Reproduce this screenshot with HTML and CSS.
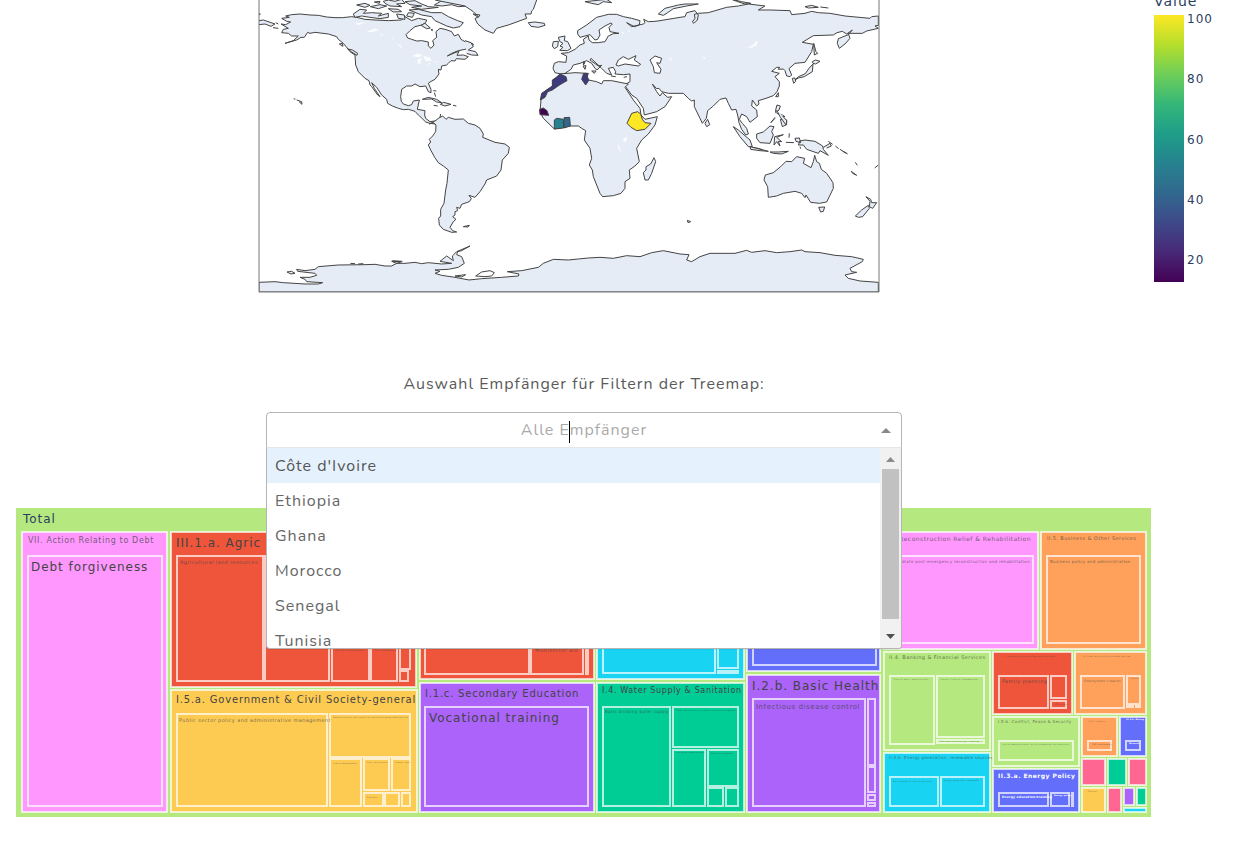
FILE: index.html
```html
<!DOCTYPE html>
<html lang="de">
<head>
<meta charset="utf-8">
<title>Treemap</title>
<link rel="stylesheet" href="styles.css">
</head>
<body>
<svg class="map" viewBox="0 0 1256 300" role="img" aria-label="Weltkarte der Empfänger">
  <defs>
    <linearGradient id="viridis" x1="0" y1="1" x2="0" y2="0">
      <stop offset="0" stop-color="#440154"/><stop offset=".111" stop-color="#482878"/><stop offset=".222" stop-color="#3e4989"/><stop offset=".333" stop-color="#31688e"/><stop offset=".444" stop-color="#26828e"/><stop offset=".556" stop-color="#1f9e89"/><stop offset=".667" stop-color="#35b779"/><stop offset=".778" stop-color="#6ece58"/><stop offset=".889" stop-color="#b5de2b"/><stop offset="1" stop-color="#fde725"/>
    </linearGradient>
    <clipPath id="frame"><rect x="259" y="0" width="620" height="292"/></clipPath>
  </defs>
  <g clip-path="url(#frame)">
    <g class="land" transform="translate(255 0) scale(.33333)">
      <path d="M78 72L92 74L107 66L95 64L80 55L103 52L92 48L110 44L135 42L165 45L190 46L215 51L240 53L262 53L290 50L305 52L330 58L360 60L400 62L440 60L450 50L470 62L490 55L515 60L512 68L500 75L480 80L465 92L453 104L458 114L470 118L485 123L500 122L520 126L520 138L528 145L537 135L533 122L545 112L543 95L555 85L570 88L582 92L590 95L598 108L610 103L618 118L630 125L645 128L655 132L652 140L630 148L610 152L590 160L577 168L600 158L612 154L606 166L625 165L640 170L630 178L604 176L600 183L588 182L580 190L575 195L560 198L558 210L550 208L552 222L540 238L525 246L520 250L528 268L528 278L520 275L512 258L495 260L480 252L470 258L455 258L440 268L437 290L439 304L445 312L460 317L470 314L475 303L493 300L487 328L510 332L509 345L512 355L525 365L545 362L540 372L525 370L512 366L498 352L490 345L480 334L460 328L445 329L430 325L412 318L398 310L395 298L380 285L365 262L350 248L358 265L375 290L368 285L350 260L345 255L342 242L330 235L310 215L302 195L300 165L285 155L280 148L265 130L250 118L245 110L220 102L180 97L165 100L158 97L148 112L138 112L125 120L90 130L115 122L130 108L110 108L100 100L80 98L85 88L100 85Z"/>
      <path d="M10 40L16 42L12 46M12 62L25 60L60 72L48 79L30 72L12 74M62 68L70 72M54 83L70 85M116 296L121 298M125 300L140 305L141 313L132 305M253 132L262 130L264 139ZM278 147L292 150L308 160L306 166L290 156ZM502 298L520 292L545 298L560 308L545 306L530 297ZM536 316L548 318M556 313L566 307L588 313L570 318ZM594 316L604 318M535 272L544 273M538 278L542 290M528 89L532 88L532 92Z"/>
      <path d="M295 42L315 28L335 30L325 40L350 38L380 40L370 48L400 40L400 52L375 56L345 52L320 48L300 52ZM305 15L330 10L345 16L330 22ZM346 20L375 14L395 18L370 26ZM358 6L375 4L373 10ZM385 4L400 0L420 4L440 -2L450 10L425 12L440 20L405 18L390 10ZM400 26L430 28L440 35L415 36ZM425 42L448 45L450 58L430 55ZM450 5L480 2L500 12L520 20L550 22L500 28L470 22L500 18L465 14ZM462 30L490 28L530 38L560 38L580 50L608 62L625 68L615 80L595 84L575 78L558 70L540 62L530 50L500 45ZM460 38L478 40L472 52L455 48ZM498 76L510 70L526 84L515 86ZM538 15L555 5L560 0L660 -5L660 25L640 18L610 20L590 14L560 18Z"/>
    </g>
    <g class="land" transform="translate(400 110) scale(.33333)">
      <path d="M88 42L104 34L115 25L128 18L138 28L145 22L165 28L190 27L205 40L225 45L240 55L250 72L248 82L285 97L315 102L328 112L325 130L307 150L303 180L290 198L260 210L255 222L240 245L225 262L207 256L214 266L208 275L185 283L180 295L170 292L173 302L165 305L165 315L158 320L168 328L160 335L150 352L158 362L170 366L155 367L130 358L118 345L116 325L122 318L122 298L132 280L137 240L141 220L145 180L130 168L115 158L104 142L92 120L85 105L92 96L88 88L98 78L107 65L108 45L100 38Z"/>
      <path d="M190 350L208 346L204 351ZM120 22L122 12M735 210L730 188L738 180L738 170L752 162L762 143L767 155L755 190L745 210Z"/>
    </g>
    <g class="land" transform="translate(465 0) scale(.33333)">
      <path d="M288 222L270 218L264 205L268 190L280 185L303 187L305 168L288 160L310 158L330 148L345 135L358 130L355 118L370 108L372 120L382 128L400 128L420 125L430 108L445 101L462 100L435 95L432 82L442 72L438 69L420 78L402 90L405 105L398 118L390 120L375 104L360 108L345 112L338 102L338 92L365 75L395 52L415 47L430 43L455 43L475 50L500 55L525 62L523 75L508 80L485 68L500 80L535 72L540 68L536 58L550 65L570 64L585 62L645 52L660 50L665 38L690 32L700 45L697 60L687 70L682 66L690 55L688 43L700 40L730 38L785 22L820 18L850 12L900 18L880 30L915 30L975 32L980 44L1020 40L1040 34L1060 38L1095 40L1140 48L1215 55L1220 50L1240 48L1240 76L1230 78L1240 85L1205 93L1192 100L1150 100L1155 115L1140 132L1123 145L1117 130L1120 116L1150 104L1162 90L1145 102L1132 94L1116 98L1105 105L1045 107L1012 127L1045 133L1040 155L1020 187L990 190L972 206L980 225L975 230L965 228L960 212L955 207L940 208L944 202L935 202L920 214L943 220L930 230L943 245L943 258L936 275L925 287L900 296L880 302L882 312L875 318L862 300L860 318L875 330L877 350L855 367L845 350L830 342L823 358L832 370L845 385L850 402L842 405L830 388L822 368L818 345L813 328L800 330L790 310L783 294L765 298L745 318L728 332L724 355L712 370L705 355L688 320L688 300L680 303L670 295L655 280L610 280L590 275L582 265L575 266L562 252L575 275L585 288L592 278L608 292L620 290L600 320L575 335L538 345L535 325L515 295L500 285L478 255L495 245L495 222L475 224L450 222L452 215L445 202L430 205L440 225L425 220L410 205L378 175L375 180L400 198L410 196L396 210L390 205L380 190L365 182L345 190L325 195L318 208L300 220Z"/>
      <path class="water" d="M453 195L460 180L475 170L490 178L513 167L508 180L527 193L520 198L480 192L460 198ZM555 180L570 168L590 175L585 190L575 188L588 208L585 220L568 218L565 200Z"/>
      <path d="M285 222L330 218L365 220L370 240L395 245L410 252L415 242L440 242L490 252L480 262L505 300L525 325L528 345L540 358L577 350L570 375L550 402L530 420L515 445L523 485L510 498L493 510L495 535L480 545L480 565L468 580L445 587L413 590L405 580L385 530L382 510L373 495L380 475L375 445L358 420L362 392L350 385L340 378L315 378L268 387L235 355L225 335L228 300L245 270L262 262L265 240Z"/>
      <path d="M190 68L210 66L238 70L240 76L220 82L198 79ZM262 138L265 125L280 124L278 140L268 146ZM280 112L300 108L298 122L308 125L318 145L308 152L284 151L294 142L285 138L294 130L284 124ZM360 5L380 10L400 14L415 5L440 8L425 -2ZM580 42L600 25L640 15L660 12L700 12L665 18L625 26L608 38L595 46ZM356 185L360 188L355 195ZM354 198L363 197L360 208ZM380 213L393 213L388 220ZM438 228L452 230M476 232L486 230M0 122L18 128L25 140L10 150L32 155L39 166L20 165L5 160M-90 0L0 18L25 35L40 50L30 56L38 72L60 90L85 100L95 85L130 75L185 55L180 42L198 42L200 33L205 28L215 0L215 -5L-90 -5ZM24 42L45 45L40 52Z"/>
      <path d="M720 370L728 358L734 374L725 380ZM800 -2L830 5L858 10L840 12L815 4ZM1020 20L1040 16L1060 22L1030 24ZM1066 21L1090 24M1046 130L1053 155L1058 160L1048 165ZM1042 185L1052 180L1065 184L1052 192L1044 190ZM1044 192L1042 215L1018 230L1000 234L990 240L1000 230L1020 222L1032 205ZM982 235L990 234L992 244L986 250ZM932 290L940 278L940 290ZM932 330L936 315L946 318L942 330L932 338ZM935 340L952 345L960 350L948 350M918 368L930 352M946 358L965 360L965 374L952 380ZM805 380L820 390L855 420L862 440L850 440L825 410ZM860 442L880 445L895 450"/>
    </g>
    <g class="land" transform="translate(660 110) scale(.33333)">
      <path d="M316 195L340 188L362 170L378 154L395 155L410 140L434 145L430 160L453 173L460 155L464 136L470 155L478 160L484 178L500 190L519 218L520 235L500 276L478 280L452 277L438 255L435 263L425 250L405 244L370 250L350 258L325 262L323 230L312 210Z"/>
      <path d="M476 292L494 291L490 304L482 306ZM586 318L605 300L625 286L628 295L608 320L595 322ZM618 260L632 268L635 278L650 278L638 295L628 290L630 274ZM420 93L435 90L465 94L488 108L490 118L505 136L480 122L475 130L440 118L430 105L415 105ZM405 85L418 84L422 98L408 94ZM290 72L310 66L330 48L342 50L335 65L340 75L330 100L300 98L290 85ZM270 110L325 124L300 122L272 118ZM330 126L355 126L385 124L365 132L340 130ZM344 80L370 74L350 82L365 95L355 94L360 108L350 95L342 105ZM388 70L387 83M378 97L402 98M420 110L422 116M490 112L510 100L514 108L500 114M505 94L518 103M526 108L536 116M540 118L563 132M548 124L560 130M586 157L592 166M574 184L590 196L578 190ZM644 174L655 165M82 331L92 335L84 338ZM350 0L360 20L378 45L380 32L368 18M332 38L345 25"/>
    </g>
    <g class="land" transform="translate(255 220) scale(.33333)">
      <path d="M12 187L60 185L85 188L150 192L190 192L203 188L155 185L150 178L135 172L165 172L185 166L180 160L128 154L125 148L150 152L180 148L190 140L250 135L330 134L360 133L390 138L410 138L425 130L410 124L440 125L425 130L450 130L480 127L500 131L520 128L560 132L590 130L555 124L575 108L595 122L592 108L605 95L645 78L620 92L608 95L605 104L620 110L628 130L610 142L580 148L540 150L555 154L540 160L560 166L600 172L642 180L680 176L740 172L790 168L792 162L757 155L800 152L850 142L865 130L895 118L940 120L970 117L1000 114L1035 112L1075 115L1115 107L1155 110L1190 98L1225 92L1275 102L1302 104L1295 120L1310 125L1335 110L1365 100L1440 100L1475 91L1490 97L1530 92L1565 98L1605 95L1640 90L1650 95L1695 98L1740 106L1790 110L1825 118L1822 125L1785 145L1790 155L1805 157L1770 165L1780 175L1815 183L1870 187L1870 216L12 216Z"/>
      <path class="water" d="M662 168L680 156L705 152L718 158L710 168L690 170ZM600 168L632 164L620 171Z"/>
      <path d="M96 156L110 154L120 160L108 162ZM286 130L300 131M310 132L325 131M412 122L442 124"/>
    </g>
    <g class="country" transform="translate(465 0) scale(.33333)">
      <path fill="#3e3a80" d="M285 222L303 230L306 242L285 254L262 270L248 275L240 292L226 300L230 280L262 258L262 240L275 232ZM356 220L370 220L366 232L372 240L362 255L350 238Z"/>
      <path fill="#440154" d="M224 328L235 324L246 332L251 346L225 344Z"/>
      <path fill="#26828e" d="M268 360L275 355L295 358L296 384L268 387Z"/>
      <path fill="#31688e" d="M297 353L314 352L316 378L297 384Z"/>
      <path fill="#fde725" d="M500 340L518 335L527 342L532 358L540 368L558 370L540 388L515 392L498 382L486 370Z"/>
    </g>
    <g class="lake" transform="translate(255 0) scale(.33333)">
      <path d="M300 70L333 66L310 76ZM335 95L360 85L372 90L350 97ZM374 104L384 102L380 108ZM392 70L398 72ZM408 112L418 114L412 117ZM426 132L436 134L444 148ZM470 168L490 160L504 168L488 172ZM488 178L500 174L495 194L487 188ZM505 168L525 172L530 182L512 184ZM515 192L530 188L522 194ZM530 187L552 183L548 187Z"/>
      <path d="M1100 95L1110 98L1103 104ZM1116 93L1126 90L1124 96ZM1240 175L1250 174L1248 183ZM1476 142L1494 136L1504 122L1508 124L1505 135L1490 143ZM1342 172L1375 168L1350 172L1352 180ZM1105 415L1117 410L1113 425L1106 427ZM1088 435L1092 435L1099 458L1090 445ZM1113 460L1116 475L1117 480Z"/>
    </g>
  </g>
  <path class="map-frame" d="M259 0V292H879V0"/>
  <rect x="1154" y="15" width="30" height="267" fill="url(#viridis)"/>
  <g class="scale">
    <text x="1154" y="6" class="scale-title">Value</text>
    <text x="1187" y="23">100</text><text x="1187" y="83">80</text><text x="1187" y="144">60</text><text x="1187" y="204">40</text><text x="1187" y="264">20</text>
  </g>
</svg>

<main>
  <form class="filter">
    <label for="recipient">Auswahl Empfänger für Filtern der Treemap:</label>
    <div class="select">
      <div class="control">
        <input id="recipient" type="text" role="combobox" aria-expanded="true" aria-controls="options" placeholder="Alle Empfänger" autocomplete="off">
        <span class="caret"></span>
        <svg class="arrow" viewBox="0 0 10 5"><path d="M0 5L5 0L10 5Z"/></svg>
      </div>
      <div class="menu">
        <ul id="options" role="listbox" aria-label="Empfänger">
          <li role="option" aria-selected="true" class="active">Côte d'Ivoire</li>
          <li role="option">Ethiopia</li>
          <li role="option">Ghana</li>
          <li role="option">Morocco</li>
          <li role="option">Senegal</li>
          <li role="option">Tunisia</li>
        </ul>
        <div class="scrollbar">
          <svg viewBox="0 0 9 5"><path d="M0 5L4.500 0L9 5Z" fill="#8b8b8b"/></svg>
          <span class="thumb"></span>
          <svg viewBox="0 0 9 5"><path d="M0 0L4.500 5L9 0Z" fill="#505050"/></svg>
        </div>
      </div>
    </div>
  </form>

  <svg class="treemap" viewBox="0 508 1168 310" role="img" aria-label="Treemap">
    <rect class="lime root" x="16" y="508" width="1135" height="309"/>
    <g class="tiles">
      <g class="pink"><rect x="22" y="532" width="145" height="280"/><rect x="28" y="556" width="134" height="250"/></g>
      <g class="red"><rect x="171" y="532" width="245" height="155"/><rect x="177" y="556" width="86" height="125"/><rect x="265" y="556" width="64" height="125"/><rect x="332" y="556" width="37" height="125"/><rect x="371" y="556" width="26" height="125"/><rect x="400" y="556" width="10" height="113"/><rect x="400" y="671" width="8" height="10"/></g>
      <g class="yellow"><rect x="171" y="690" width="246" height="122"/><rect x="177" y="714" width="150" height="92"/><rect x="330" y="714" width="80" height="43"/><rect x="330" y="759" width="31" height="47"/><rect x="364" y="759" width="25" height="31"/><rect x="392" y="759" width="18" height="31"/><rect x="364" y="793" width="19" height="13"/><rect x="385" y="793" width="14" height="13"/><rect x="402" y="793" width="8" height="13"/></g>
      <g class="red"><rect x="420" y="532" width="174" height="147"/><rect x="425" y="556" width="104" height="118"/><rect x="531" y="556" width="52" height="118"/><rect x="586" y="556" width="2" height="118"/></g>
      <g class="purple"><rect x="420" y="683" width="174" height="129"/><rect x="425" y="707" width="163" height="99"/></g>
      <g class="cyan"><rect x="597" y="532" width="147" height="147"/><rect x="603" y="556" width="112" height="117"/><rect x="718" y="556" width="20" height="112"/><rect x="718" y="671" width="20" height="2"/></g>
      <g class="green"><rect x="597" y="683" width="147" height="129"/><rect x="603" y="707" width="67" height="99"/><rect x="673" y="707" width="65" height="40"/><rect x="673" y="750" width="32" height="56"/><rect x="708" y="750" width="30" height="36"/><rect x="708" y="788" width="15" height="18"/><rect x="726" y="788" width="12" height="18"/></g>
      <g class="blue"><rect x="747" y="532" width="133" height="139"/><rect x="753" y="556" width="123" height="109"/></g>
      <g class="purple"><rect x="747" y="675" width="133" height="137"/><rect x="753" y="699" width="112" height="107"/><rect x="868" y="699" width="7" height="66"/><rect x="868" y="767" width="7" height="25"/><rect x="868" y="795" width="7" height="5"/><rect x="868" y="803" width="7" height="3"/></g>
      <g class="pink"><rect x="884" y="532" width="154" height="117"/><rect x="890" y="556" width="143" height="87"/></g>
      <g class="orange"><rect x="1041" y="532" width="105" height="117"/><rect x="1047" y="556" width="93" height="87"/></g>
      <g class="lime"><rect x="884" y="652" width="106" height="98"/><rect x="890" y="676" width="44" height="68"/><rect x="937" y="676" width="47" height="61"/><rect x="937" y="740" width="47" height="3"/></g>
      <g class="red"><rect x="993" y="652" width="79" height="62"/><rect x="999" y="676" width="49" height="32"/><rect x="1051" y="676" width="15" height="22"/><rect x="1051" y="701" width="15" height="7"/></g>
      <g class="orange"><rect x="1075" y="652" width="71" height="62"/><rect x="1081" y="676" width="43" height="32"/><rect x="1127" y="676" width="13" height="28"/><rect x="1127" y="706" width="6" height="1"/><rect x="1136" y="706" width="4" height="1"/></g>
      <g class="lime"><rect x="993" y="717" width="86" height="49"/><rect x="999" y="741" width="74" height="19"/></g>
      <g class="blue"><rect x="993" y="769" width="86" height="43"/><rect x="999" y="793" width="49" height="13"/><rect x="1051" y="793" width="18" height="13"/><rect x="1072" y="793" width="1" height="13"/></g>
      <g class="cyan"><rect x="884" y="753" width="106" height="59"/><rect x="890" y="777" width="48" height="29"/><rect x="941" y="777" width="43" height="29"/></g>
      <g class="orange"><rect x="1082" y="717" width="35" height="39"/><rect x="1088" y="741" width="23" height="9"/></g>
      <g class="blue"><rect x="1120" y="717" width="26" height="39"/><rect x="1126" y="741" width="14" height="9"/></g>
      <g class="rose"><rect x="1082" y="759" width="23" height="26"/><rect x="1129" y="759" width="17" height="26"/><rect x="1108" y="788" width="13" height="24"/></g>
      <g class="green"><rect x="1108" y="759" width="18" height="26"/><rect x="1137" y="788" width="9" height="17"/></g>
      <g class="yellow"><rect x="1082" y="788" width="23" height="24"/></g>
      <g class="purple"><rect x="1124" y="788" width="10" height="17"/></g>
      <g class="cyan"><rect x="1124" y="808" width="22" height="4"/></g>
    </g>
    <g class="labels">
      <g class="t12"><text x="23" y="523" class="dark">Total</text><text x="31" y="571">Debt forgiveness</text><text x="176" y="547">III.1.a. Agric</text><text x="429" y="722">Vocational training</text><text x="752" y="690">I.2.b. Basic Health</text></g>
      <g class="t10"><text x="176" y="703">I.5.a. Government &amp; Civil Society-general</text><text x="425" y="697">I.1.c. Secondary Education</text></g>
      <g class="t8"><text x="602" y="693">I.4. Water Supply &amp; Sanitation</text></g>
      <g class="t8 soft"><text x="28" y="543">VII. Action Relating to Debt</text></g>
      <g class="t7 soft"><text x="756" y="709">Infectious disease control</text></g>
      <g class="t6"><text x="998" y="778" class="white bold">II.3.a. Energy Policy</text><text x="1031" y="541" text-anchor="end" class="soft">I.2. Reconstruction Relief &amp; Rehabilitation</text></g>
      <g class="t5 soft"><text x="1047" y="540">II.5. Business &amp; Other Services</text><text x="889" y="659">II.4. Banking &amp; Financial Services</text><text x="180" y="564">Agricultural land resources</text><text x="179" y="722">Public sector policy and administrative management</text><text x="1002" y="683">Family planning</text><text x="535" y="652">Multisector aid</text></g>
      <g class="t4 soft"><text x="998" y="723">I.5.b. Conflict, Peace &amp; Security</text><text x="1030" y="563" text-anchor="end">Immediate post-emergency reconstruction and rehabilitation</text><text x="1050" y="563">Business policy and administration</text><text x="889" y="759">II.3.b. Energy generation, renewable sources</text><text x="605" y="713">Basic drinking water supply</text></g>
      <g class="t3"><text x="1002" y="798" class="white bold">Energy education/training</text><text x="1084" y="682" class="soft">Employment creation</text></g>
      <g class="t2 soft"><text x="1002" y="745">Civilian peace-building, conflict prevention and resolution</text><text x="1082" y="657">I.6. Other Social Infrastructure &amp; Services</text><text x="1003" y="657">I.3. Population Policies &amp; Reproductive Health</text><text x="893" y="782">Solar energy for centralised grids</text><text x="940" y="742">Education and training in banking</text><text x="333" y="718">Decentralisation and support to subnational government entities</text><text x="333" y="764">Judicial development</text><text x="367" y="763">Civic participation</text><text x="395" y="763">Human rights</text><text x="367" y="798">Elections</text><text x="676" y="711">Water sector policy and administrative management</text><text x="676" y="753">Sanitation large systems</text><text x="711" y="754">Waste management</text><text x="893" y="680">Financial policy administration</text><text x="940" y="680">Informal financial intermediaries</text><text x="944" y="781">Energy generation, renewable</text><text x="1088" y="722">III.2.a. Industry</text><text x="1092" y="745">SME development</text><text x="1054" y="705">STD control</text><text x="1130" y="679">Culture</text><text x="335" y="651">Agricultural development</text><text x="375" y="651">Rural development</text><text x="1088" y="792">Tourism</text></g>
      <g class="t2 white bold"><text x="1126" y="720">III.2.b. Mining</text><text x="1129" y="744">Minerals</text><text x="1054" y="796">Energy policy</text></g>
    </g>
  </svg>
</main>
</body>
</html>
```
FILE: styles.css
```css
* { box-sizing: border-box; }
body { margin: 0; background: #fff; color: #5a5a5a; font: 16px/24px Nunito, Lato, sans-serif; letter-spacing: 1px; }
svg { display: block; }

.map { width: 100%; height: auto; }
.map path { vector-effect: non-scaling-stroke; }
.land { fill: #e5ecf6; stroke: #444; stroke-width: 1px; stroke-linejoin: round; }
.water { fill: #fff; }
.country { stroke: #444; stroke-width: 1px; }
.lake { fill: #fff; fill-opacity: .8; }
.map-frame { fill: none; stroke: #777; stroke-width: 1px; }
.scale { fill: #2a3f5f; font: 12px Verdana, "DejaVu Sans", sans-serif; }
.scale-title { font-size: 14px; }

main { padding: 72px 88px 0 0; }
.filter { display: flex; flex-direction: column; align-items: center; gap: 16px; }
.select { position: relative; width: 636px; max-width: 100%; }
.control { position: relative; height: 36px; border: 1px solid #b5b5b5; border-radius: 4px 4px 0 0; background: #fff; }
.control input { width: 100%; height: 34px; padding: 0 8px; border: 0; outline: 0; background: none; font: inherit; letter-spacing: inherit; text-align: center; color: #555; }
.control input::placeholder { color: #aaa; opacity: 1; }
.caret { position: absolute; left: 302px; top: 8px; width: 1px; height: 22px; background: #000; }
.arrow { position: absolute; right: 10px; top: 15px; width: 10px; height: 5px; fill: #888; }
.menu { position: absolute; z-index: 1; top: 35px; left: 0; right: 0; height: 202px; display: flex; overflow: hidden; border: 1px solid #b5b5b5; border-top-color: #e6e6e6; border-radius: 0 0 4px 4px; background: #fff; box-shadow: 0 1px 0 rgba(0, 0, 0, .06); }
.menu ul { flex: 1; margin: 0; padding: 0; list-style: none; }
.menu li { height: 35px; padding: 0 8px; line-height: 37px; color: #666; }
.menu .active { background: #e5f2fe; color: #555; }
.scrollbar { display: flex; flex-direction: column; align-items: center; justify-content: space-between; width: 21px; padding: 9px 2px 9px 1px; background: #f1f1f1; }
.scrollbar svg { width: 9px; height: 5px; }
.thumb { width: 17px; height: 150px; margin-bottom: 8px; background: #c1c1c1; }

.treemap { width: 100%; height: auto; margin-top: 60px; }
.tiles { stroke: rgba(255, 255, 255, .7); stroke-width: 2px; }
.lime { fill: #b6e880; }
.pink { fill: #ff97ff; }
.red { fill: #ef553b; }
.yellow { fill: #fecb52; }
.purple { fill: #ab63fa; }
.cyan { fill: #19d3f3; }
.green { fill: #00cc96; }
.blue { fill: #636efa; }
.orange { fill: #ffa15a; }
.rose { fill: #ff6692; }
.labels { fill: #444; font-family: Verdana, "DejaVu Sans", sans-serif; }
.labels text { letter-spacing: .08em; }
.dark { fill: #2a3f5f; }
.white { fill: #fff; }
.bold { font-weight: 700; }
.soft { fill-opacity: .75; }
.t12 { font-size: 12px; }
.t10 { font-size: 10px; }
.t8 { font-size: 8px; }
.t7 { font-size: 7px; }
.t6 { font-size: 6px; }
.t5 { font-size: 5px; }
.t4 { font-size: 4px; }
.t3 { font-size: 3px; }
.t2 { font-size: 2px; }
```
